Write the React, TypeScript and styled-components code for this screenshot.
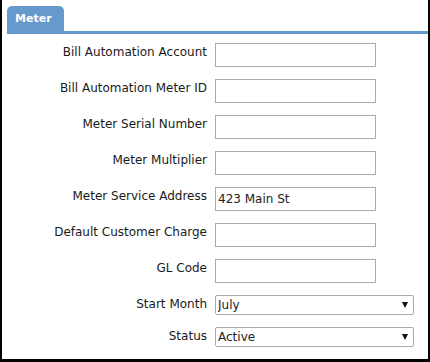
import React from "react";
import styled, { createGlobalStyle } from "styled-components";

const fields = [
  { label: "Bill Automation Account", value: "" },
  { label: "Bill Automation Meter ID", value: "" },
  { label: "Meter Serial Number", value: "" },
  { label: "Meter Multiplier", value: "" },
  { label: "Meter Service Address", value: "423 Main St" },
  { label: "Default Customer Charge", value: "" },
  { label: "GL Code", value: "" },
];

const selects = [
  { label: "Start Month", value: "July", options: ["January", "February", "March", "April", "May", "June", "July", "August", "September", "October", "November", "December"] },
  { label: "Status", value: "Active", options: ["Active", "Inactive"] },
];

function App() {
  return (
    <>
      <GlobalStyle />
      <Frame>
        <TabBar>
          <Tab>Meter</Tab>
        </TabBar>
        <Form>
          {fields.map((f) => (
            <React.Fragment key={f.label}>
              <Label>{f.label}</Label>
              <TextInput defaultValue={f.value} />
            </React.Fragment>
          ))}
          {selects.map((s) => (
            <React.Fragment key={s.label}>
              <Label>{s.label}</Label>
              <SelectWrap>
                <Select defaultValue={s.value}>
                  {s.options.map((o) => (
                    <option key={o}>{o}</option>
                  ))}
                </Select>
                <Arrow />
              </SelectWrap>
            </React.Fragment>
          ))}
        </Form>
      </Frame>
    </>
  );
}

const GlobalStyle = createGlobalStyle`
  body {
    margin: 0;
    background: #fff;
    font-family: "DejaVu Sans", Verdana, sans-serif;
  }
`;

const Frame = styled.div`
  width: 430px;
  height: 362px;
  box-sizing: border-box;
  border-style: solid;
  border-color: #000;
  border-width: 0 2px 3px 2px;
  background: #fff;
  padding: 6px 0 0 5px;
`;

const TabBar = styled.div`
  display: flex;
  border-bottom: 3px solid #6699cc;
`;

const Tab = styled.div`
  width: 57px;
  height: 25px;
  box-sizing: border-box;
  background: #6699cc;
  border-radius: 5px 5px 0 0;
  color: #fff;
  font-weight: bold;
  font-size: 11px;
  padding: 6px 0 0 8px;
`;

const Form = styled.div`
  display: grid;
  grid-template-columns: 200px auto;
  column-gap: 8px;
  row-gap: 12px;
  align-items: start;
  justify-content: start;
  padding-top: 9px;
  font-size: 12px;
  color: #1a1a1a;
`;

const Label = styled.div`
  text-align: right;
  white-space: nowrap;
  padding-top: 2px;
  line-height: 14px;
`;

const TextInput = styled.input`
  width: 161px;
  height: 24px;
  box-sizing: border-box;
  border: 1px solid #aaa;
  padding: 0 2px;
  font: inherit;
  font-size: 12px;
  color: #222;
  outline: none;
`;

const SelectWrap = styled.div`
  position: relative;
  width: 199px;
  height: 20px;
`;

const Select = styled.select`
  appearance: none;
  width: 100%;
  height: 100%;
  box-sizing: border-box;
  border: 1px solid #aaa;
  border-radius: 2px;
  background: #fff;
  padding: 0 2px;
  font: inherit;
  font-size: 12px;
  color: #222;
  outline: none;
`;

const Arrow = styled.span`
  position: absolute;
  right: 6px;
  top: 7px;
  width: 0;
  height: 0;
  border-left: 3px solid transparent;
  border-right: 3px solid transparent;
  border-top: 6px solid #111;
  pointer-events: none;
`;

export default App;
